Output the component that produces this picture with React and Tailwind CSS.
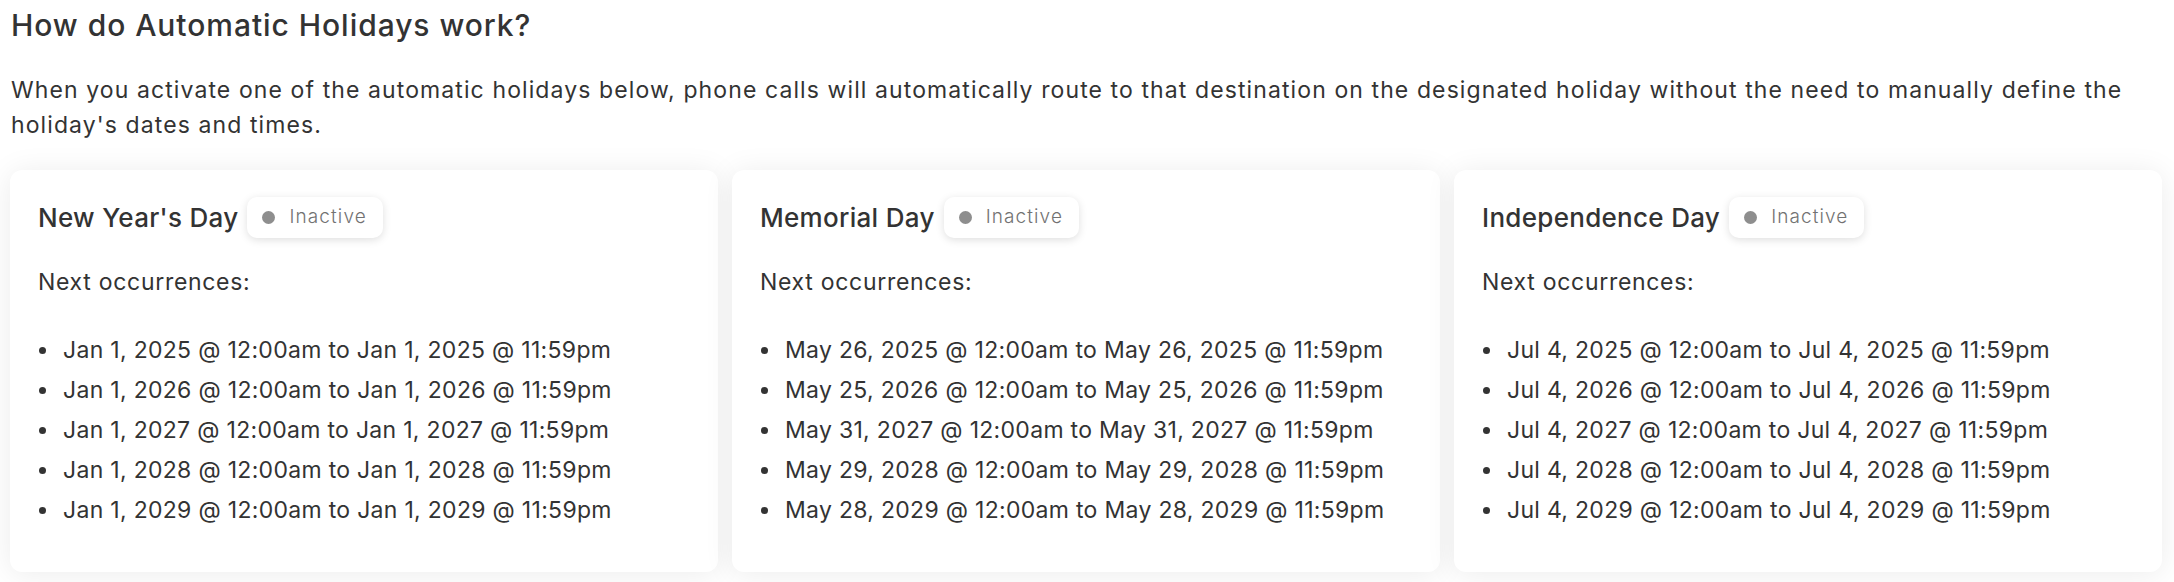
const holidays = [
  {
    name: "New Year's Day",
    dates: [
      'Jan 1, 2025 @ 12:00am to Jan 1, 2025 @ 11:59pm',
      'Jan 1, 2026 @ 12:00am to Jan 1, 2026 @ 11:59pm',
      'Jan 1, 2027 @ 12:00am to Jan 1, 2027 @ 11:59pm',
      'Jan 1, 2028 @ 12:00am to Jan 1, 2028 @ 11:59pm',
      'Jan 1, 2029 @ 12:00am to Jan 1, 2029 @ 11:59pm',
    ],
  },
  {
    name: 'Memorial Day',
    dates: [
      'May 26, 2025 @ 12:00am to May 26, 2025 @ 11:59pm',
      'May 25, 2026 @ 12:00am to May 25, 2026 @ 11:59pm',
      'May 31, 2027 @ 12:00am to May 31, 2027 @ 11:59pm',
      'May 29, 2028 @ 12:00am to May 29, 2028 @ 11:59pm',
      'May 28, 2029 @ 12:00am to May 28, 2029 @ 11:59pm',
    ],
  },
  {
    name: 'Independence Day',
    dates: [
      'Jul 4, 2025 @ 12:00am to Jul 4, 2025 @ 11:59pm',
      'Jul 4, 2026 @ 12:00am to Jul 4, 2026 @ 11:59pm',
      'Jul 4, 2027 @ 12:00am to Jul 4, 2027 @ 11:59pm',
      'Jul 4, 2028 @ 12:00am to Jul 4, 2028 @ 11:59pm',
      'Jul 4, 2029 @ 12:00am to Jul 4, 2029 @ 11:59pm',
    ],
  },
];

const HolidayCard = ({ holiday }) => (
  <div className="bg-white rounded-[12px] shadow-[0_2px_30px_rgba(0,0,0,0.08)] pl-[28px] pr-[30px] pt-[27px] pb-[42px]">
    {/* Header */}
    <div className="flex items-center gap-[9px]">
      <h3 className="text-[26px] font-medium text-[#333] leading-none tracking-[0.3px]">{holiday.name}</h3>
      <span className="flex items-center h-[41px] pl-[15px] pr-[16px] rounded-[10px] bg-white shadow-[0_2px_9px_rgba(0,0,0,0.13)] text-[19px] tracking-[1.1px] text-[#727272] font-light">
        <span className="w-[13px] h-[13px] rounded-full bg-[#8e8e8e] mr-[14px]"></span>
        Inactive
      </span>
    </div>

    <p className="mt-[28px] text-[23px] leading-[32px] tracking-[0.7px] text-[#333]">Next occurrences:</p>

    <ul className="mt-[32px] text-[23px] leading-[40px] tracking-[0.3px] text-[#333]">
      {holiday.dates.map((d) => (
        <li key={d} className="flex items-center">
          <span className="w-[7px] h-[7px] rounded-full bg-[#333] ml-[1px] mr-[17px] shrink-0"></span>
          {d}
        </li>
      ))}
    </ul>
  </div>
);

export default function App() {
  return (
    <div className="bg-white pl-[10px] pr-[12px] pt-[5px] min-h-[582px]" style={{ fontFamily: 'Inter, "Open Sans", sans-serif' }}>
      <h2 className="ml-[1px] text-[30px] font-medium text-[#333] leading-[40px] tracking-[0.95px]">How do Automatic Holidays work?</h2>
      <p className="ml-[1px] mt-[28px] text-[23px] leading-[35px] tracking-[1.1px] text-[#333]">
        When you activate one of the automatic holidays below, phone calls will automatically route to that destination on the designated holiday without the need to manually define the holiday's dates and times.
      </p>
      <div className="mt-[27px] grid grid-cols-3 gap-[14px]">
        {holidays.map((h) => (
          <HolidayCard key={h.name} holiday={h} />
        ))}
      </div>
    </div>
  );
}
